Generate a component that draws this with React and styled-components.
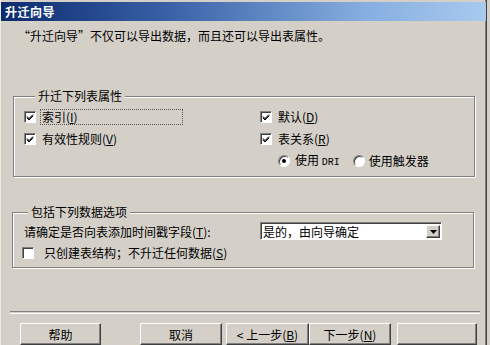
import React from 'react';
import styled, { createGlobalStyle } from 'styled-components';

const GlobalStyle = createGlobalStyle`
  html, body {
    margin: 0;
    padding: 0;
    background: #d4d0c8;
  }
  body {
    font-family: "Noto Sans CJK SC", "Liberation Sans", sans-serif;
    font-size: 12px;
    color: #000;
  }
`;

const Window = styled.div`
  width: 487px;
  height: 345px;
  box-sizing: border-box;
  padding-top: 2px;
  background: #d4d0c8;
  border-left: 1px solid #ece9e2;
  border-right: 1px solid #404040;
  box-shadow: inset -1px 0 0 #808080;
  overflow: hidden;
  display: flex;
  flex-direction: column;
`;

const TitleBar = styled.div`
  height: 19px;
  display: flex;
  align-items: center;
  padding-left: 4px;
  background: linear-gradient(to right, #0c2a6e 0%, #3a62a8 35%, #86aedf 75%, #a8caef 100%);
  color: #fff;
  font-weight: bold;
  font-size: 12px;
  letter-spacing: 0.5px;
`;

const Description = styled.div`
  margin: 8px 0 0 17px;
  line-height: 14px;
`;

const Group = styled.div`
  margin: ${p => p.$top}px 0 0 ${p => p.$left}px;
  width: ${p => p.$width}px;
  height: ${p => p.$height}px;
  box-sizing: border-box;
  border: 1px solid #808080;
  box-shadow: inset 1px 1px 0 #fff, 1px 1px 0 #fff;
  padding-left: ${p => p.$pad}px;
`;

const GroupTitle = styled.div`
  display: block;
  width: fit-content;
  margin: -8px 0 0 ${p => p.$indent}px;
  padding: 0 3px;
  line-height: 14px;
  background: #d4d0c8;
`;

const OptionGrid = styled.div`
  display: grid;
  grid-template-columns: 236px 1fr;
  grid-auto-rows: ${p => p.$row}px;
  margin-top: ${p => p.$gap}px;
`;

const Option = styled.label`
  display: flex;
  align-items: center;
  gap: ${p => p.$gap || 4}px;
  line-height: 14px;
`;

const Label = styled.span`
  display: inline-block;
  padding: 0 1px;
  width: ${p => (p.$width ? `${p.$width}px` : 'auto')};
  box-sizing: border-box;
  border: 1px dotted ${p => (p.$focused ? '#555' : 'transparent')};
`;

const Accel = styled.span`
  text-decoration: underline;
`;

const Mono = styled.span`
  font-family: "Liberation Mono", "DejaVu Sans Mono", monospace;
  font-size: 10px;
`;

const Box = styled.span`
  width: 12px;
  height: 12px;
  box-sizing: border-box;
  flex: none;
  background: #fff;
  border-style: solid;
  border-width: 1px;
  border-color: #808080 #fff #fff #808080;
  box-shadow: inset 1px 1px 0 #404040;
  display: flex;
  align-items: center;
  justify-content: center;
`;

const Round = styled.span`
  width: 12px;
  height: 12px;
  box-sizing: border-box;
  flex: none;
  border-radius: 50%;
  background: #fff;
  border: 1px solid;
  border-color: #808080 #fff #fff #808080;
  box-shadow: inset 1px 1px 0 #404040;
  display: flex;
  align-items: center;
  justify-content: center;

  &::after {
    content: '';
    width: 4px;
    height: 4px;
    border-radius: 50%;
    background: ${p => (p.$on ? '#000' : 'transparent')};
  }
`;

const Check = ({ on }) => (
  <Box>
    {on && (
      <svg width="8" height="8" viewBox="0 0 8 8">
        <path d="M1 3.5 L3 5.5 L7 1.5 M1 4.5 L3 6.5 L7 2.5 M1 5 L3 7 L7 3" stroke="#000" strokeWidth="1" fill="none" />
      </svg>
    )}
  </Box>
);

const Radio = ({ on }) => <Round $on={on} />;

const RadioRow = styled.div`
  display: flex;
  align-items: center;
  margin-left: 18px;
  gap: 13px;
`;

const Select = styled.div`
  width: 182px;
  height: 18px;
  box-sizing: border-box;
  background: #fff;
  border-style: solid;
  border-width: 1px;
  border-color: #808080 #fff #fff #808080;
  box-shadow: inset 1px 1px 0 #404040;
  display: flex;
  align-items: center;
  justify-content: space-between;
  padding: 1px 1px 0 2px;
  line-height: 14px;
  align-self: center;
`;

const ArrowButton = styled.span`
  width: 14px;
  height: 13px;
  box-sizing: border-box;
  background: #d4d0c8;
  border-style: solid;
  border-width: 1px;
  border-color: #fff #404040 #404040 #fff;
  box-shadow: inset -1px -1px 0 #808080;
  display: flex;
  align-items: center;
  justify-content: center;
`;

const Row = styled.div`
  display: flex;
  align-items: center;
  height: ${p => p.$height}px;
  margin-left: ${p => p.$indent || 0}px;
  margin-top: ${p => p.$top || 0}px;
`;

const Separator = styled.div`
  margin: 43px 6px 0 9px;
  height: 1px;
  border-top: 1px solid #808080;
  border-bottom: 1px solid #fff;
`;

const ButtonBar = styled.div`
  display: flex;
  margin: 9px 0 0 19px;
`;

const Button = styled.button`
  width: ${p => p.$width}px;
  height: 22px;
  margin-left: ${p => p.$gap || 0}px;
  padding: 0;
  font: inherit;
  font-size: 12px;
  color: #000;
  background: #d4d0c8;
  border-style: solid;
  border-width: 1px;
  border-color: #fff #404040 #404040 #fff;
  box-shadow: inset -1px -1px 0 #808080;
  text-align: center;
  cursor: default;
`;

export default function App() {
  return (
    <>
      <GlobalStyle />
      <Window>
        <TitleBar>升迁向导</TitleBar>
        <Description>“升迁向导”不仅可以导出数据，而且还可以导出表属性。</Description>

        <Group $top={53} $left={12} $width={462} $height={81} $pad={10}>
          <GroupTitle $indent={11}>升迁下列表属性</GroupTitle>
          <OptionGrid $row={22} $gap={3}>
            <Option>
              <Check on />
              <Label $focused $width={143}>索引(<Accel>I</Accel>)</Label>
            </Option>
            <Option>
              <Check on />
              <Label>默认(<Accel>D</Accel>)</Label>
            </Option>
            <Option>
              <Check on />
              <Label>有效性规则(<Accel>V</Accel>)</Label>
            </Option>
            <Option>
              <Check on />
              <Label>表关系(<Accel>R</Accel>)</Label>
            </Option>
            <span />
            <RadioRow>
              <Option $gap={5}>
                <Radio on />
                <span>使用 <Mono>DRI</Mono></span>
              </Option>
              <Option $gap={4}>
                <Radio />
                <span>使用触发器</span>
              </Option>
            </RadioRow>
          </OptionGrid>
        </Group>

        <Group $top={35} $left={11} $width={462} $height={56} $pad={11}>
          <GroupTitle $indent={4}>包括下列数据选项</GroupTitle>
          <OptionGrid $row={20} $gap={2}>
            <Row $height={20}>请确定是否向表添加时间戳字段(<Accel>T</Accel>):</Row>
            <Select>
              <span>是的，由向导确定</span>
              <ArrowButton>
                <svg width="7" height="4" viewBox="0 0 7 4">
                  <path d="M0 0 H7 L3.5 4 Z" fill="#000" />
                </svg>
              </ArrowButton>
            </Select>
          </OptionGrid>
          <Row $height={21} $indent={-2} $top={1}>
            <Option $gap={10}>
              <Check />
              <span>只创建表结构；不升迁任何数据(<Accel>S</Accel>)</span>
            </Option>
          </Row>
        </Group>

        <Separator />

        <ButtonBar>
          <Button $width={81}>帮助</Button>
          <Button $width={82} $gap={39}>取消</Button>
          <Button $width={83} $gap={4}>&lt; 上一步(<Accel>B</Accel>)</Button>
          <Button $width={82}>下一步(<Accel>N</Accel>)</Button>
          <Button $width={80} $gap={6}></Button>
        </ButtonBar>
      </Window>
    </>
  );
}
